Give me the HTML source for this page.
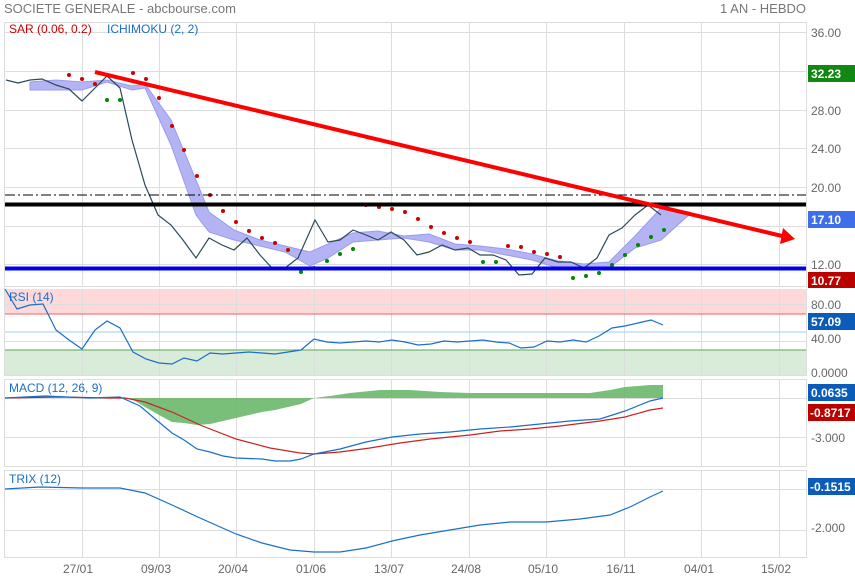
<!DOCTYPE html><html><head><meta charset="utf-8"><style>
body{margin:0;background:#fff;width:855px;height:580px;overflow:hidden;font-family:"Liberation Sans",sans-serif}
svg text{font-family:"Liberation Sans",sans-serif}
</style></head><body>
<svg width="855" height="580" xmlns="http://www.w3.org/2000/svg">
<text x="4" y="13" font-size="13" fill="#777">SOCIETE GENERALE - abcbourse.com</text>
<text x="806" y="13" font-size="13" fill="#777" text-anchor="end">1 AN - HEBDO</text>
<!-- panel borders -->
<g fill="none" stroke="#ddd" stroke-width="1">
<rect x="4.5" y="22.5" width="802" height="264"/>
<rect x="4.5" y="288.5" width="802" height="87"/>
<rect x="4.5" y="379.5" width="802" height="87"/>
<rect x="4.5" y="470.5" width="802" height="87"/>
</g>
<!-- RSI zones -->
<rect x="5" y="289" width="801" height="25" fill="#fdd9d9"/>
<rect x="5" y="350" width="801" height="25" fill="#d9ebd9"/>
<g stroke="#ddd" stroke-width="1">
<line x1="5" x2="806" y1="32.5" y2="32.5"/><line x1="5" x2="806" y1="71.5" y2="71.5"/><line x1="5" x2="806" y1="110.5" y2="110.5"/><line x1="5" x2="806" y1="148.5" y2="148.5"/><line x1="5" x2="806" y1="187.5" y2="187.5"/><line x1="5" x2="806" y1="226.5" y2="226.5"/><line x1="5" x2="806" y1="264.5" y2="264.5"/>
<line x1="5" x2="806" y1="304.5" y2="304.5"/><line x1="5" x2="806" y1="341.5" y2="341.5"/>
<line x1="5" x2="806" y1="398.5" y2="398.5"/><line x1="5" x2="806" y1="437.5" y2="437.5"/>
<line x1="5" x2="806" y1="489.5" y2="489.5"/><line x1="5" x2="806" y1="530.5" y2="530.5"/>
<g id="v"><line x1="82.5" x2="82.5" y1="22" y2="558"/><line x1="159.5" x2="159.5" y1="22" y2="558"/><line x1="236.5" x2="236.5" y1="22" y2="558"/><line x1="314.5" x2="314.5" y1="22" y2="558"/><line x1="391.5" x2="391.5" y1="22" y2="558"/><line x1="469.5" x2="469.5" y1="22" y2="558"/><line x1="546.5" x2="546.5" y1="22" y2="558"/><line x1="624.5" x2="624.5" y1="22" y2="558"/><line x1="701.5" x2="701.5" y1="22" y2="558"/><line x1="779.5" x2="779.5" y1="22" y2="558"/></g>
</g>
<rect x="5" y="287" width="802" height="2" fill="#fff"/><rect x="5" y="376" width="802" height="3" fill="#fff"/><rect x="5" y="467" width="802" height="3" fill="#fff"/>
<line x1="5" x2="806" y1="314" y2="314" stroke="#f06060"/>
<line x1="5" x2="806" y1="332" y2="332" stroke="#99ccff"/>
<line x1="5" x2="806" y1="350" y2="350" stroke="#55aa55"/>
<!-- ichimoku cloud -->
<polygon fill="#b4b4f5" stroke="#9a9af0" stroke-width="1" points="30,82 56,80 82,82 107,80 132,86 145,84 171,120 196,180 209,212 234,230 260,240 285,246 310,252 328,244 353,233 378,231 404,236 429,234 455,244 480,246 506,249 532,254 558,261 584,264 609,262 635,236 661,208 690,212 690,214 661,240 635,248 609,268 584,268 558,268 532,260 506,255 480,250 455,250 429,242 404,238 378,240 353,242 328,258 310,266 285,252 260,246 234,240 209,232 196,215 171,145 145,88 132,90 107,82 82,90 56,90 30,90"/>
<!-- close line -->
<polyline fill="none" stroke="#2a4a5a" stroke-width="1.2" points="6,80 18,83 30,80 42,79 56,85 69,89 82,101 95,88 107,76 120,88 132,140 145,185 158,215 171,225 183,240 196,258 209,238 222,245 234,250 247,238 260,255 272,268 285,268 298,258 315,220 328,242 340,240 353,230 366,235 378,240 391,232 404,240 417,255 429,252 442,245 455,250 468,248 480,255 493,255 506,260 519,275 532,274 545,258 558,262 571,262 584,268 597,258 609,235 622,228 635,215 648,205 661,215"/>
<!-- SAR -->
<g fill="#cc0000"><circle cx="69" cy="75" r="2"/><circle cx="82" cy="79" r="2"/><circle cx="95" cy="84" r="2"/><circle cx="133" cy="73" r="2"/><circle cx="146" cy="79" r="2"/><circle cx="159" cy="98" r="2"/><circle cx="172" cy="126" r="2"/><circle cx="184" cy="150" r="2"/><circle cx="197" cy="176" r="2"/><circle cx="210" cy="195" r="2"/><circle cx="223" cy="211" r="2"/><circle cx="236" cy="222" r="2"/><circle cx="249" cy="231" r="2"/><circle cx="262" cy="238" r="2"/><circle cx="275" cy="243" r="2"/><circle cx="288" cy="250" r="2"/><circle cx="366" cy="205" r="2"/><circle cx="379" cy="207" r="2"/><circle cx="392" cy="209" r="2"/><circle cx="405" cy="212" r="2"/><circle cx="418" cy="219" r="2"/><circle cx="431" cy="227" r="2"/><circle cx="444" cy="233" r="2"/><circle cx="457" cy="238" r="2"/><circle cx="470" cy="242" r="2"/><circle cx="508" cy="246" r="2"/><circle cx="521" cy="247" r="2"/><circle cx="534" cy="252" r="2"/><circle cx="547" cy="254" r="2"/><circle cx="560" cy="257" r="2"/></g>
<g fill="#008800"><circle cx="107" cy="100" r="2"/><circle cx="120" cy="100" r="2"/><circle cx="301" cy="272" r="2"/><circle cx="314" cy="268" r="2"/><circle cx="327" cy="261" r="2"/><circle cx="340" cy="254" r="2"/><circle cx="353" cy="249" r="2"/><circle cx="483" cy="262" r="2"/><circle cx="496" cy="262" r="2"/><circle cx="573" cy="278" r="2"/><circle cx="586" cy="276" r="2"/><circle cx="599" cy="273" r="2"/><circle cx="612" cy="265" r="2"/><circle cx="625" cy="255" r="2"/><circle cx="638" cy="245" r="2"/><circle cx="651" cy="237" r="2"/><circle cx="664" cy="230" r="2"/></g>
<!-- lines -->
<line x1="5" x2="806" y1="195" y2="195" stroke="#000" stroke-width="1" stroke-dasharray="10,3,2,3"/>
<line x1="5" x2="806" y1="204.5" y2="204.5" stroke="#000" stroke-width="4"/>
<line x1="5" x2="806" y1="268.5" y2="268.5" stroke="#0000ee" stroke-width="4"/>
<line x1="95" y1="72" x2="782" y2="236" stroke="#ff0000" stroke-width="4"/>
<polygon points="795,239 783,228 780,244" fill="#ff0000"/>
<text x="9" y="33" font-size="12" fill="#cc0000">SAR (0.06, 0.2)</text>
<text x="107" y="33" font-size="12" fill="#1a6fc9">ICHIMOKU (2, 2)</text>
<!-- RSI -->
<polyline fill="none" stroke="#1a6fc9" stroke-width="1.2" points="5,289 17,309 30,305 43,304 56,330 69,340 82,349 95,330 107,321 120,328 133,352 146,359 159,363 172,364 184,358 197,361 210,353 223,354 236,353 249,352 262,353 275,354 288,352 301,350 314,339 327,342 340,343 353,342 366,341 379,342 392,340 405,342 418,345 431,344 444,341 457,342 470,341 483,340 496,342 509,343 521,348 534,347 547,341 560,342 573,340 586,342 599,336 612,328 625,326 638,323 651,320 663,325"/>
<text x="9" y="301" font-size="12" fill="#1a6fc9">RSI (14)</text>
<!-- MACD -->
<path d="M130,398 L145,407 L159,415 L172,422 L184,423 L197,425 L210,424 L223,421 L236,418 L249,415 L262,412 L275,410 L288,407 L301,404 L314,398 L330,396 L350,393 L380,390 L410,390 L440,392 L470,393 L500,393 L530,393 L560,393 L590,393 L610,390 L625,387 L650,385 L663,385 L663,398 Z" fill="#6ab86a" opacity="0.9"/>
<polyline fill="none" stroke="#cc2222" stroke-width="1.2" points="5,398 60,397 110,398 125,398 145,402 172,412 200,425 236,439 270,448 300,453 314,454 340,452 370,448 400,443 430,439 470,435 500,431 530,429 560,426 600,421 625,417 650,410 663,408"/>
<polyline fill="none" stroke="#1a6fc9" stroke-width="1.2" points="5,398 45,396 90,398 120,397 140,406 160,423 172,433 184,440 197,449 210,452 223,456 236,458 262,459 275,461 290,461 301,459 314,454 340,449 366,442 392,437 420,434 450,432 480,429 510,427 540,424 570,421 600,419 625,411 650,401 663,398"/>
<text x="9" y="392" font-size="12" fill="#1a6fc9">MACD (12, 26, 9)</text>
<!-- TRIX -->
<polyline fill="none" stroke="#1a6fc9" stroke-width="1.2" points="5,489 40,487 82,488 120,488 145,493 172,505 200,518 236,534 262,543 290,550 314,552 340,552 366,548 392,541 420,535 450,530 480,525 510,522 546,522 580,519 610,515 630,507 650,497 663,491"/>
<text x="9" y="483" font-size="12" fill="#1a6fc9">TRIX (12)</text>
<!-- right axis -->
<g font-size="12" fill="#666">
<text x="811" y="37">36.00</text><text x="811" y="115">28.00</text><text x="811" y="153">24.00</text><text x="811" y="192">20.00</text><text x="811" y="269">12.00</text>
<text x="811" y="309">80.00</text><text x="811" y="343">40.00</text><text x="811" y="377">0.0000</text>
<text x="811" y="442">-3.000</text><text x="811" y="532">-2.000</text>
</g>
<g font-size="12" fill="#fff" font-weight="bold">
<rect x="808" y="65" width="47" height="17" fill="#118811"/><text x="811" y="78">32.23</text>
<rect x="808" y="211" width="47" height="17" fill="#3d6fe8"/><text x="811" y="224">17.10</text>
<rect x="808" y="272" width="47" height="16" fill="#bb0000"/><text x="811" y="285">10.77</text>
<rect x="808" y="313" width="47" height="17" fill="#0a5cb8"/><text x="811" y="326">57.09</text>
<rect x="808" y="384" width="47" height="17" fill="#0a5cb8"/><text x="811" y="397">0.0635</text>
<rect x="808" y="404" width="47" height="17" fill="#bb0000"/><text x="810" y="417">-0.8717</text>
<rect x="808" y="478" width="47" height="17" fill="#0a5cb8"/><text x="810" y="491">-0.1515</text>
</g>
<g font-size="12" fill="#666" text-anchor="middle">
<text x="78" y="573">27/01</text><text x="156" y="573">09/03</text><text x="233" y="573">20/04</text><text x="311" y="573">01/06</text><text x="389" y="573">13/07</text><text x="466" y="573">24/08</text><text x="543" y="573">05/10</text><text x="621" y="573">16/11</text><text x="699" y="573">04/01</text><text x="776" y="573">15/02</text>
</g>
</svg>
</body></html>
